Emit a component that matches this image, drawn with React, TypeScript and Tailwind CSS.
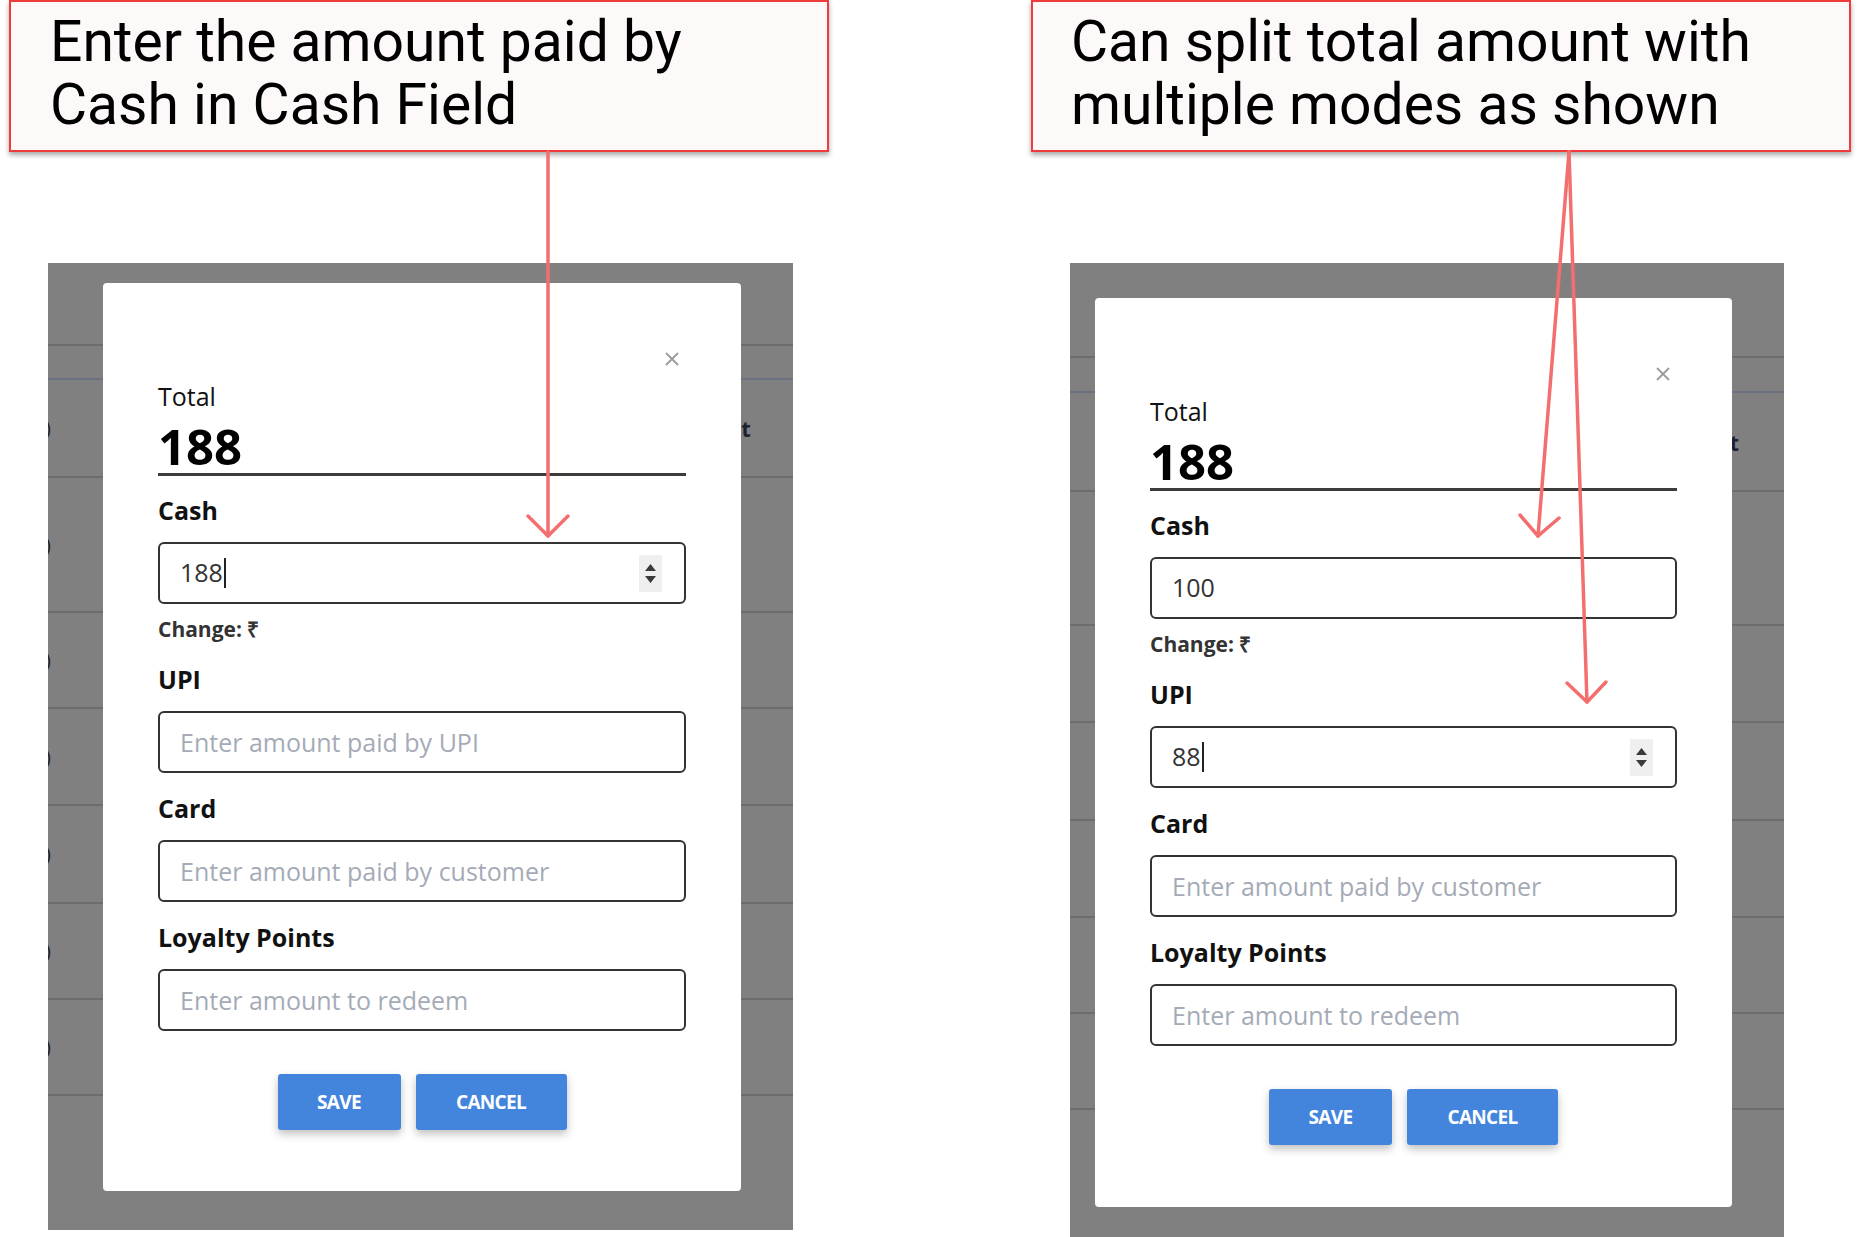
import React from "react";

type FieldProps = {
  label: string;
  placeholder: string;
  value?: string;
  focused?: boolean;
  className?: string;
};

const Spinner = () => (
  <div className="flex h-[37px] w-[23px] flex-col items-center justify-center gap-[5px] bg-[#efefef]">
    <svg width="11" height="7" viewBox="0 0 11 7">
      <path d="M5.5 0 L11 7 L0 7 Z" fill="#3a3a3a" />
    </svg>
    <svg width="11" height="7" viewBox="0 0 11 7">
      <path d="M0 0 L11 0 L5.5 7 Z" fill="#3a3a3a" />
    </svg>
  </div>
);

const Field = ({ label, placeholder, value, focused, className }: FieldProps) => {
  return (
    <div className={className}>
      <div className="text-[25px] font-bold leading-[30px] text-[#111]">{label}</div>
      {value ? (
        <div className="mt-[17px] flex h-[62px] items-center rounded-md border-2 border-[#333] pl-[20px] pr-[22px] text-[25px] text-[#333]">
          <span>{value}</span>
          {focused && <span className="ml-[1px] h-[30px] w-[2px] bg-[#222]" />}
          <div className="flex-1" />
          {focused && <Spinner />}
        </div>
      ) : (
        <input
          readOnly
          placeholder={placeholder}
          className="mt-[17px] block h-[62px] w-full rounded-md border-2 border-[#333] bg-white px-[20px] text-[25px] text-[#333] outline-none placeholder:text-[#a4abb6]"
        />
      )}
    </div>
  );
};

interface ModalProps {
  cash: string;
  upi?: string;
  focus: "cash" | "upi";
}

const PaymentModal = ({ cash, upi, focus }: ModalProps) => {
  return (
    <div className="flex h-full w-full flex-col rounded-[4px] bg-white px-[55px] pt-[62px] font-['Open_Sans',sans-serif]">
      <div className="flex h-[28px] items-center justify-end pr-[6px]">
        <svg width="16" height="16" viewBox="0 0 16 16">
          <line x1="2" y1="2" x2="14" y2="14" stroke="#9b9b9b" strokeWidth="1.8" />
          <line x1="14" y1="2" x2="2" y2="14" stroke="#9b9b9b" strokeWidth="1.8" />
        </svg>
      </div>
      <div className="mt-[8px] text-[25px] leading-[30px] text-[#111]">Total</div>
      <div className="mt-[8px] border-b-[3px] border-[#3d3d3d] text-[49px] font-bold leading-[54px] text-black">
        188
      </div>
      <div className="mt-[19px]">
        <Field
          label="Cash"
          placeholder="Enter amount paid by cash"
          value={cash}
          focused={focus === "cash"}
        />
        <div className="mt-[12px] text-[21px] font-bold leading-[26px] text-[#333]">
          Change: ₹
        </div>
      </div>
      <Field
        className="mt-[22px]"
        label="UPI"
        placeholder="Enter amount paid by UPI"
        value={upi}
        focused={focus === "upi"}
      />
      <Field className="mt-[20px]" label="Card" placeholder="Enter amount paid by customer" />
      <Field className="mt-[20px]" label="Loyalty Points" placeholder="Enter amount to redeem" />
      <div className="mt-[43px] flex justify-center gap-[15px]">
        <button className="h-[56px] w-[123px] rounded-[3px] bg-[#4385dd] text-[19px] font-bold tracking-[-0.7px] text-white shadow-[0_4px_8px_rgba(0,0,0,0.25)]">
          SAVE
        </button>
        <button className="h-[56px] w-[151px] rounded-[3px] bg-[#4385dd] text-[19px] font-bold tracking-[-0.7px] text-white shadow-[0_4px_8px_rgba(0,0,0,0.25)]">
          CANCEL
        </button>
      </div>
    </div>
  );
};

const Backdrop = ({
  rows,
  marks,
  tEdge,
}: {
  rows: number[];
  marks: boolean;
  tEdge: number;
}) => (
  <div className="flex flex-col font-['Open_Sans',sans-serif]">
    {rows.map((h, i) => (
      <div
        key={i}
        style={{ height: h }}
        className={
          "flex items-center border-b-2 " +
          (i === 1 ? "border-[#6a7282]" : "border-[#6d6d6d]")
        }
      >
        {marks && i >= 2 && i <= 8 && (
          <span className="-ml-[3px] text-[20px] leading-none text-[#222]">)</span>
        )}
        {i === 2 && (
          <div
            style={{ width: tEdge }}
            className="text-right text-[22px] font-bold leading-none text-[#1c2330]"
          >
            Unit
          </div>
        )}
      </div>
    ))}
  </div>
);

export default function App() {
  return (
    <div className="relative h-[1237px] w-[1860px] overflow-hidden bg-white">
      <div className="flex pl-[9px]">
        <div className="flex w-[820px] flex-col">
          <div className="h-[152px] border-2 border-[#ef3b3b] bg-[#fdf9f9] pl-[39px] pt-[8px] font-['Roboto',sans-serif] text-[57px] leading-[63px] text-black shadow-[0_3px_5px_rgba(0,0,0,0.35)]">
            Enter the amount paid by
            <br />
            Cash in Cash Field
          </div>
          <div className="relative ml-[39px] mt-[111px] h-[967px] w-[745px] overflow-hidden bg-[#808080]">
            <Backdrop rows={[83, 34, 98, 135, 96, 97, 98, 96, 96, 200]} marks tEdge={700} />
            <div className="absolute left-[55px] top-[20px] h-[908px] w-[638px]">
              <PaymentModal cash="188" focus="cash" />
            </div>
          </div>
        </div>
        <div className="ml-[202px] flex w-[820px] flex-col">
          <div className="h-[152px] border-2 border-[#ef3b3b] bg-[#fdf9f9] pl-[38px] pt-[8px] font-['Roboto',sans-serif] text-[57px] leading-[63px] text-black shadow-[0_3px_5px_rgba(0,0,0,0.35)]">
            Can split total amount with
            <br />
            multiple modes as shown
          </div>
          <div className="relative ml-[39px] mt-[111px] h-[974px] w-[714px] overflow-hidden bg-[#808080]">
            <Backdrop rows={[95, 35, 99, 134, 97, 98, 97, 96, 96, 200]} marks={false} tEdge={669} />
            <div className="absolute left-[25px] top-[35px] h-[909px] w-[637px]">
              <PaymentModal cash="100" upi="88" focus="upi" />
            </div>
          </div>
        </div>
      </div>

      <svg
        className="pointer-events-none absolute inset-0"
        width="1860"
        height="1237"
        viewBox="0 0 1860 1237"
      >
        <g stroke="#f36e6e" strokeWidth="3.5" fill="none" strokeLinecap="round" strokeLinejoin="round">
          <line x1="548" y1="152" x2="548" y2="536" />
          <polyline points="528,516 548,536 568,516" />
          <line x1="1569" y1="152" x2="1538" y2="536" />
          <polyline points="1520,515 1538,536 1559,518" />
          <line x1="1569" y1="152" x2="1587" y2="702" />
          <polyline points="1567,683 1587,702 1606,682" />
        </g>
      </svg>
    </div>
  );
}
